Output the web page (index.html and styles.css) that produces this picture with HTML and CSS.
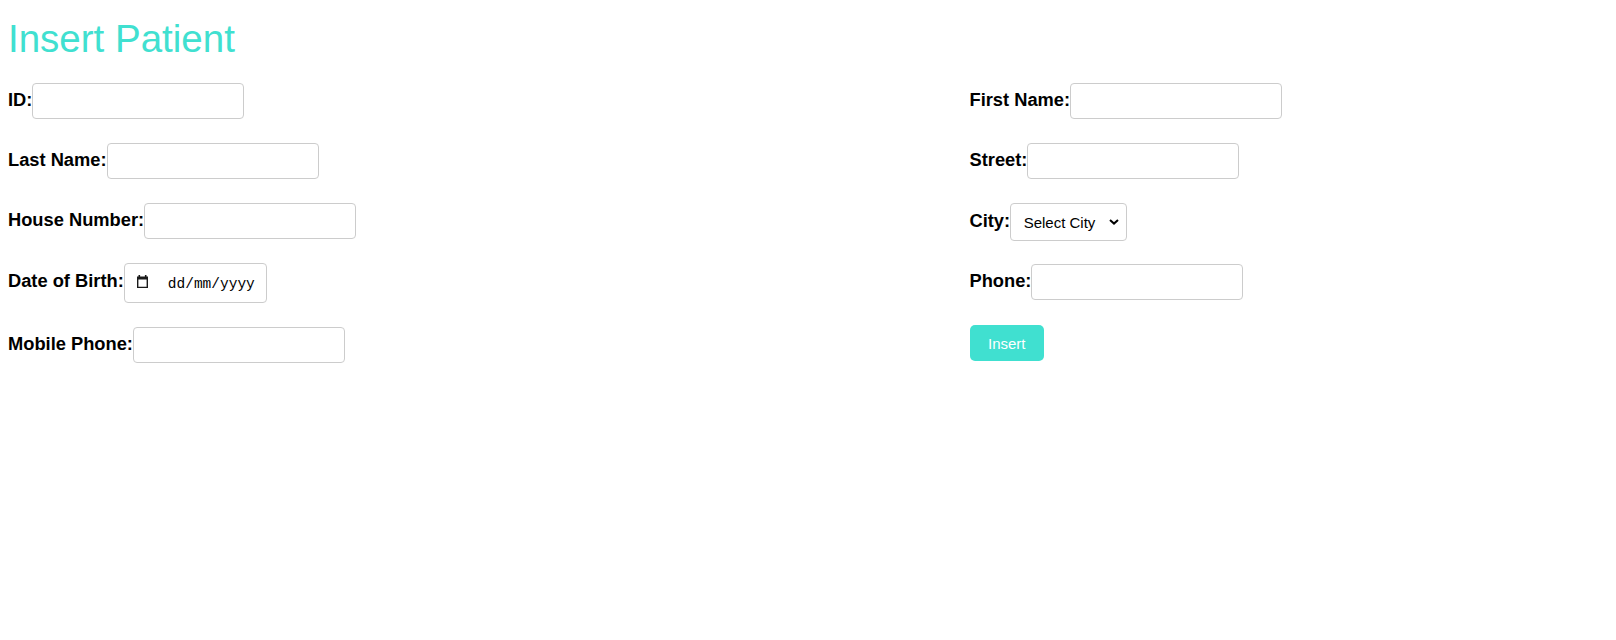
FILE: index.html
```html
<!DOCTYPE html>
<html lang="en">
<head>
<meta charset="utf-8">
<title>Insert Patient</title>
<link rel="stylesheet" href="styles.css">
</head>
<body>
<h1 class="title">Insert Patient</h1>
<form class="patient-form">
  <div class="col">
    <div class="field"><label class="lbl" for="pid">ID:</label><input class="text-input" id="pid" type="text"></div>
    <div class="field"><label class="lbl" for="lname">Last Name:</label><input class="text-input" id="lname" type="text"></div>
    <div class="field"><label class="lbl" for="house">House Number:</label><input class="text-input" id="house" type="text"></div>
    <div class="field field-date"><label class="lbl">Date of Birth:</label>
      <div class="date-field">
        <svg class="cal-icon" width="11" height="13" viewBox="0 0 11 13" aria-hidden="true">
          <rect x="1.5" y="0" width="1.6" height="2" fill="#1a1a1a"/>
          <rect x="7.9" y="0" width="1.6" height="2" fill="#1a1a1a"/>
          <path d="M0 1.5H11V13H0Z M1.4 4.6H9.6V11.8H1.4Z" fill="#1a1a1a" fill-rule="evenodd"/>
        </svg>
        <span class="date-text">dd/mm/yyyy</span>
      </div>
    </div>
    <div class="field"><label class="lbl" for="mobile">Mobile Phone:</label><input class="text-input" id="mobile" type="text"></div>
  </div>
  <div class="col">
    <div class="field"><label class="lbl" for="fname">First Name:</label><input class="text-input" id="fname" type="text"></div>
    <div class="field"><label class="lbl" for="street">Street:</label><input class="text-input" id="street" type="text"></div>
    <div class="field field-city"><label class="lbl" for="city">City:</label>
      <div class="select-wrap">
        <select class="city-select" id="city"><option>Select City</option></select>
        <svg class="chevron" width="10" height="6" viewBox="0 0 10 6" aria-hidden="true"><path d="M1 1L5 4.6L9 1" fill="none" stroke="#000" stroke-width="2"/></svg>
      </div>
    </div>
    <div class="field"><label class="lbl" for="phone">Phone:</label><input class="text-input" id="phone" type="text"></div>
    <div class="field field-btn"><button class="insert-btn" type="button">Insert</button></div>
  </div>
</form>
</body>
</html>
```
FILE: styles.css
```css
body {
  margin: 0;
  padding: 0 8px;
  font-family: "Liberation Sans", Arial, sans-serif;
  background: #fff;
  color: #000;
}

.title {
  font-size: 38.5px;
  line-height: 45px;
  font-weight: normal;
  color: #40e0d0;
  margin: 16px 0 22px;
}

.patient-form {
  display: grid;
  grid-template-columns: 961.5px 1fr;
}

.col {
  display: flex;
  flex-direction: column;
  align-items: flex-start;
  gap: 24px;
}

.field {
  display: flex;
  align-items: center;
}

.lbl {
  font-size: 18.3px;
  font-weight: bold;
  line-height: 22px;
  margin-bottom: 1.5px;
}

.field-date .lbl {
  margin-bottom: 3.5px;
}

.field-city {
  margin-bottom: -1.5px;
}

.field-btn {
  margin-top: 1.5px;
}

.text-input {
  box-sizing: border-box;
  width: 212px;
  height: 36px;
  margin: 0;
  padding: 8px;
  border: 1px solid #ccc;
  border-radius: 4px;
  font-family: inherit;
  font-size: 16px;
  background: #fff;
}

.date-field {
  box-sizing: border-box;
  display: flex;
  align-items: center;
  width: 143px;
  height: 39.5px;
  padding: 0 9px 0 12px;
  border: 1px solid #ccc;
  border-radius: 4px;
  background: #fff;
}

.cal-icon {
  flex: none;
  margin-bottom: 3px;
}

.date-text {
  margin-left: 20px;
  margin-top: 3px;
  font-family: "Liberation Mono", "DejaVu Sans Mono", monospace;
  font-size: 14.5px;
  white-space: nowrap;
  color: #000;
}

.select-wrap {
  box-sizing: border-box;
  display: flex;
  align-items: center;
  width: 117px;
  height: 38px;
  border: 1px solid #ccc;
  border-radius: 4px;
  background: #fff;
}

.city-select {
  appearance: none;
  -webkit-appearance: none;
  flex: 1;
  min-width: 0;
  height: 100%;
  margin: 0;
  padding: 0 0 0 12.5px;
  border: 0;
  background: transparent;
  font-family: inherit;
  font-size: 15px;
  color: #000;
  outline: none;
}

.chevron {
  flex: none;
  margin: 0 7px 0 0;
}

.insert-btn {
  box-sizing: border-box;
  height: 36px;
  margin: 0;
  padding: 0 18.5px;
  border: 0;
  border-radius: 5px;
  background: #40e0d0;
  color: #fff;
  font-family: inherit;
  font-size: 15px;
  cursor: pointer;
}
```
